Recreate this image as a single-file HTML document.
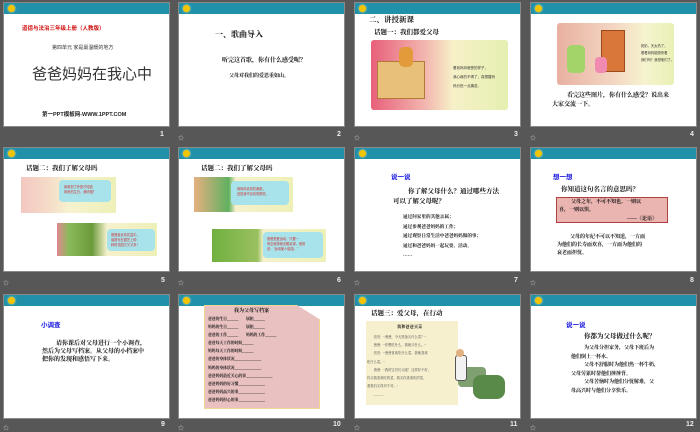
<!DOCTYPE html>
<html><head><meta charset="utf-8"><style>
*{margin:0;padding:0;box-sizing:border-box}
body{width:700px;height:431px;background:#575757;position:relative;overflow:hidden;font-family:"Liberation Sans","Noto Sans CJK SC",sans-serif}
.s{position:absolute;width:167px;height:125px;background:#fff;overflow:hidden;border:1px solid #8a8a8a}
.bar{position:absolute;left:0;top:0;width:100%;height:11px;background:#2190a9}
.sun{position:absolute;left:4px;top:2px;width:7px;height:7px;border-radius:50%;background:#f4c400;box-shadow:0 0 2px #fff3a0}
.a{position:absolute;white-space:nowrap;color:#111}
.n{position:absolute;color:#eee;font-size:7px;font-weight:bold}
.st{position:absolute;color:#ccc;font-size:6px}
.b{font-weight:bold}
.blue{color:#1515e0;font-weight:bold}
.ser{font-family:"Liberation Serif","Noto Serif CJK SC",serif}
</style></head><body>

<!-- slide 1 -->
<div class="s" style="left:3px;top:2px"><div class="bar"></div><div class="sun"></div>
<div class="a b" style="left:18px;top:21px;font-size:5.5px;color:#d01010">道德与法治三年级上册（人教版）</div>
<div class="a" style="left:48px;top:41px;font-size:5px;color:#333">第四单元 家是最温暖的地方</div>
<div class="a" style="left:28px;top:60px;font-size:15px;color:#333">爸爸妈妈在我心中</div>
<div class="a b" style="left:38px;top:107px;font-size:5.5px;color:#222">第一PPT模板网-WWW.1PPT.COM</div>
</div>
<div class="n" style="left:160px;top:131px">1</div>

<!-- slide 2 -->
<div class="s" style="left:178px;top:2px"><div class="bar"></div><div class="sun"></div>
<div class="a b ser" style="left:36px;top:26px;font-size:8px">一、歌曲导入</div>
<div class="a b ser" style="left:43px;top:52px;font-size:6px">听完这首歌，你有什么感受呢？</div>
<div class="a b ser" style="left:50px;top:69px;font-size:5px">父母对我们的爱恩重如山。</div>
</div>
<div class="st" style="left:178px;top:133px">☆</div><div class="n" style="left:337px;top:131px">2</div>

<!-- slide 3 -->
<div class="s" style="left:354px;top:2px"><div class="bar"></div><div class="sun"></div>
<div class="a b ser" style="left:14px;top:11px;font-size:7.5px">二、讲授新课</div>
<div class="a b ser" style="left:19px;top:24px;font-size:6.5px">话题一：我们都爱父母</div>
<div style="position:absolute;left:16px;top:37px;width:137px;height:70px;background:linear-gradient(90deg,#e8607a 0%,#f3b7b0 40%,#f6f1c8 60%,#e6efb0 100%);border-radius:3px"></div>
<div style="position:absolute;left:22px;top:58px;width:48px;height:38px;background:#e9c07a;border:1px solid #b07a3a"></div>
<div style="position:absolute;left:44px;top:44px;width:14px;height:20px;background:#e39a3a;border-radius:5px"></div>
<div class="a" style="left:98px;top:61px;font-size:3.5px;line-height:9px;color:#333">看到妈妈难受的样子，<br>我心疼的不得了，真想替妈<br>妈分担一点痛苦。</div>
</div>
<div class="st" style="left:354px;top:133px">☆</div><div class="n" style="left:514px;top:131px">3</div>

<!-- slide 4 -->
<div class="s" style="left:530px;top:2px"><div class="bar"></div><div class="sun"></div>
<div style="position:absolute;left:26px;top:20px;width:117px;height:62px;background:linear-gradient(90deg,#e8b0a0 0%,#f4d8c4 50%,#f6f3cf 75%,#e9f0b5 100%);border-radius:3px"></div>
<div style="position:absolute;left:70px;top:27px;width:24px;height:42px;background:#d9763a;border:1px solid #9a4a1a"></div>
<div style="position:absolute;left:36px;top:42px;width:18px;height:28px;background:#a3d46a;border-radius:5px"></div>
<div style="position:absolute;left:64px;top:54px;width:12px;height:16px;background:#f08ab0;border-radius:4px"></div>
<div class="a" style="left:110px;top:40px;font-size:3.3px;line-height:7px;color:#333">奶奶，天太热了，<br>看看妈妈能照来看<br>我们吗？我想他们了。</div>
<div class="a b ser" style="left:36px;top:89px;font-size:6px;line-height:9px">看完这些图片，你有什么感受？说出来<br><span style="margin-left:-15px">大家交流一下。</span></div>
</div>
<div class="st" style="left:530px;top:133px">☆</div><div class="n" style="left:690px;top:131px">4</div>

<!-- slide 5 -->
<div class="s" style="left:3px;top:147px"><div class="bar"></div><div class="sun"></div>
<div class="a b ser" style="left:22px;top:15px;font-size:6.5px">话题二：我们了解父母吗</div>
<div style="position:absolute;left:17px;top:29px;width:95px;height:36px;background:linear-gradient(90deg,#f3c7c0 0%,#f5dcc8 30%,#f6f2cf 50%,#eef0b8 100%)"></div>
<div style="position:absolute;left:55px;top:32px;width:52px;height:22px;background:#a8e2ea;border-radius:4px"></div>
<div class="a" style="left:60px;top:37px;font-size:3.2px;line-height:5px;color:#d03030">我看到了外婆才知道<br>妈妈的生日，我好粗？</div>
<div style="position:absolute;left:53px;top:75px;width:100px;height:33px;background:linear-gradient(90deg,#e08890 0%,#8aba5a 12%,#6a9a3a 35%,#f5f1cc 50%,#eef0b8 100%)"></div>
<div style="position:absolute;left:103px;top:81px;width:48px;height:22px;background:#a8e2ea;border-radius:4px"></div>
<div class="a" style="left:107px;top:85px;font-size:3.2px;line-height:5px;color:#d03030">爸爸最喜欢花盆中，<br>最擅长在园艺上种<br>种的花园又又又多！</div>
</div>
<div class="st" style="left:3px;top:278px">☆</div><div class="n" style="left:161px;top:277px">5</div>

<!-- slide 6 -->
<div class="s" style="left:178px;top:147px"><div class="bar"></div><div class="sun"></div>
<div class="a b ser" style="left:22px;top:15px;font-size:6.5px">话题二：我们了解父母吗</div>
<div style="position:absolute;left:15px;top:29px;width:99px;height:35px;background:linear-gradient(90deg,#e6b080 0%,#60b060 35%,#f6f1cc 42%,#eef0b8 100%)"></div>
<div style="position:absolute;left:52px;top:33px;width:58px;height:24px;background:#a8e2ea;border-radius:4px"></div>
<div class="a" style="left:58px;top:39px;font-size:3.2px;line-height:5px;color:#d03030">我妈妈喜欢吃蔬菜，<br>还是我不喜欢的那些。</div>
<div style="position:absolute;left:33px;top:81px;width:114px;height:33px;background:linear-gradient(90deg,#70b040 0%,#9ac060 40%,#f5f1cc 45%,#eef0b8 100%)"></div>
<div style="position:absolute;left:84px;top:84px;width:60px;height:26px;background:#a8e2ea;border-radius:4px"></div>
<div class="a" style="left:88px;top:89px;font-size:3.2px;line-height:5px;color:#d03030">爸爸很爱运动，只要一<br>有空就带我去踢足球，他常<br>说："运动使人健康。"</div>
</div>
<div class="st" style="left:178px;top:278px">☆</div><div class="n" style="left:337px;top:277px">6</div>

<!-- slide 7 -->
<div class="s" style="left:354px;top:147px"><div class="bar"></div><div class="sun"></div>
<div class="a blue" style="left:36px;top:23px;font-size:6.5px">说一说</div>
<div class="a b ser" style="left:53px;top:40px;font-size:6.5px;line-height:8.5px">你了解父母什么？通过哪些方法</div>
<div class="a b ser" style="left:38px;top:48px;font-size:6.5px">可以了解父母呢？</div>
<div class="a b ser" style="left:48px;top:64px;font-size:4.6px;line-height:9.5px">通过问家里的其他亲属；<br>通过参观爸爸妈妈的工作；<br>通过观察日常生活中爸爸妈妈做的事；<br>通过和爸爸妈妈一起玩耍、活动。<br>……</div>
</div>
<div class="st" style="left:354px;top:278px">☆</div><div class="n" style="left:514px;top:277px">7</div>

<!-- slide 8 -->
<div class="s" style="left:530px;top:147px"><div class="bar"></div><div class="sun"></div>
<div class="a blue" style="left:22px;top:23px;font-size:6.5px">想一想</div>
<div class="a b ser" style="left:30px;top:36px;font-size:6.5px">你知道这句名言的意思吗？</div>
<div style="position:absolute;left:25px;top:49px;width:112px;height:26px;background:#eab4b0;border:1px solid #b04040"></div>
<div class="a b ser" style="left:40px;top:51px;font-size:5px;line-height:8px">父母之年，不可不知也。一则以<br><span style="margin-left:-12px">喜，一则以惧。</span></div>
<div class="a b ser" style="left:96px;top:67px;font-size:5px">——《论语》</div>
<div class="a b ser" style="left:39px;top:86px;font-size:5px;line-height:8px">父母的年纪不可以不知道，一方面<br><span style="margin-left:-13px">为他们的长寿而欢喜，一方面为他们的</span><br><span style="margin-left:-13px">衰老而担忧。</span></div>
</div>
<div class="st" style="left:530px;top:278px">☆</div><div class="n" style="left:690px;top:277px">8</div>

<!-- slide 9 -->
<div class="s" style="left:3px;top:294px"><div class="bar"></div><div class="sun"></div>
<div class="a blue" style="left:37px;top:24px;font-size:6.5px">小调查</div>
<div class="a b ser" style="left:38px;top:45px;font-size:6px;line-height:8px"><span style="margin-left:14px">请你课后对父母进行一个小调查，</span><br>然后为父母写档案。从父母的小档案中<br>把你的发现和感悟写下来。</div>
</div>
<div class="st" style="left:3px;top:423px">☆</div><div class="n" style="left:161px;top:421px">9</div>

<!-- slide 10 -->
<div class="s" style="left:178px;top:294px"><div class="bar"></div><div class="sun"></div>
<div style="position:absolute;left:25px;top:10px;width:116px;height:104px;background:#e9c1c0;border:1px solid #f0d890;clip-path:polygon(0 0,80% 0,100% 14%,100% 100%,0 100%)"></div>
<div class="a b ser" style="left:55px;top:12px;font-size:5px">我为父母写档案</div>
<div class="a b ser" style="left:29px;top:20px;font-size:3.8px;line-height:8.1px">爸爸的生日______　　属相______<br>妈妈的生日______　　属相______<br>爸爸的工作______　　妈妈的工作______<br>爸爸每天工作的时间______<br>妈妈每天工作的时间______<br>爸爸的身体状况______________<br>妈妈的身体状况______________<br>爸爸妈妈最近关心的事______________<br>爸爸妈妈的好习惯______________<br>爸爸妈妈高兴的事______________<br>爸爸妈妈担心的事______________</div>
</div>
<div class="st" style="left:178px;top:423px">☆</div><div class="n" style="left:333px;top:421px">10</div>

<!-- slide 11 -->
<div class="s" style="left:354px;top:294px"><div class="bar"></div><div class="sun"></div>
<div class="a b ser" style="left:16px;top:13px;font-size:6.5px">话题三：爱父母，在行动</div>
<div style="position:absolute;left:11px;top:26px;width:92px;height:84px;background:#f6f0cf"></div>
<div class="a b ser" style="left:42px;top:29px;font-size:4.2px">我和爸爸买菜</div>
<div class="a ser" style="left:12px;top:38px;font-size:3.3px;line-height:8.2px;color:#444">　　亮亮："爸爸，今天准备买什么菜？"<br>　　爸爸："你想吃什么，我就买什么。"<br>　　亮亮："爸爸喜欢吃什么菜，我就喜欢<br>吃什么菜。"<br>　　爸爸："我的宝贝长大啦！这样好不好，<br>你买我喜欢吃的菜，我买你喜欢吃的菜，<br>看我们买得对不对。"<br>　　______</div>
<div style="position:absolute;left:103px;top:72px;width:28px;height:20px;background:#7fa070;border-radius:4px"></div>
<div style="position:absolute;left:118px;top:80px;width:32px;height:24px;background:#5a8a4a;border-radius:8px"></div>
<div style="position:absolute;left:100px;top:60px;width:12px;height:26px;background:#f2f2f2;border:1px solid #555;border-radius:3px"></div>
<div style="position:absolute;left:101px;top:54px;width:8px;height:8px;background:#e0b080;border-radius:50%"></div>
</div>
<div class="st" style="left:354px;top:423px">☆</div><div class="n" style="left:510px;top:421px">11</div>

<!-- slide 12 -->
<div class="s" style="left:530px;top:294px"><div class="bar"></div><div class="sun"></div>
<div class="a blue" style="left:35px;top:24px;font-size:6.5px">说一说</div>
<div class="a b ser" style="left:53px;top:36px;font-size:6.5px">你都为父母做过什么呢？</div>
<div class="a b ser" style="left:40px;top:50px;font-size:5px;line-height:8.5px"><span style="margin-left:13px">为父母分担家务，父母下班后为</span><br>他们倒上一杯水。<br><span style="margin-left:13px">父母不舒服时为他们热一杯牛奶，</span><br>父母劳累时帮他们捶捶背。<br><span style="margin-left:13px">父母苦恼时为他们分忧解难，父</span><br>母高兴时与他们分享快乐。</div>
</div>
<div class="st" style="left:530px;top:423px">☆</div><div class="n" style="left:686px;top:421px">12</div>

</body></html>
